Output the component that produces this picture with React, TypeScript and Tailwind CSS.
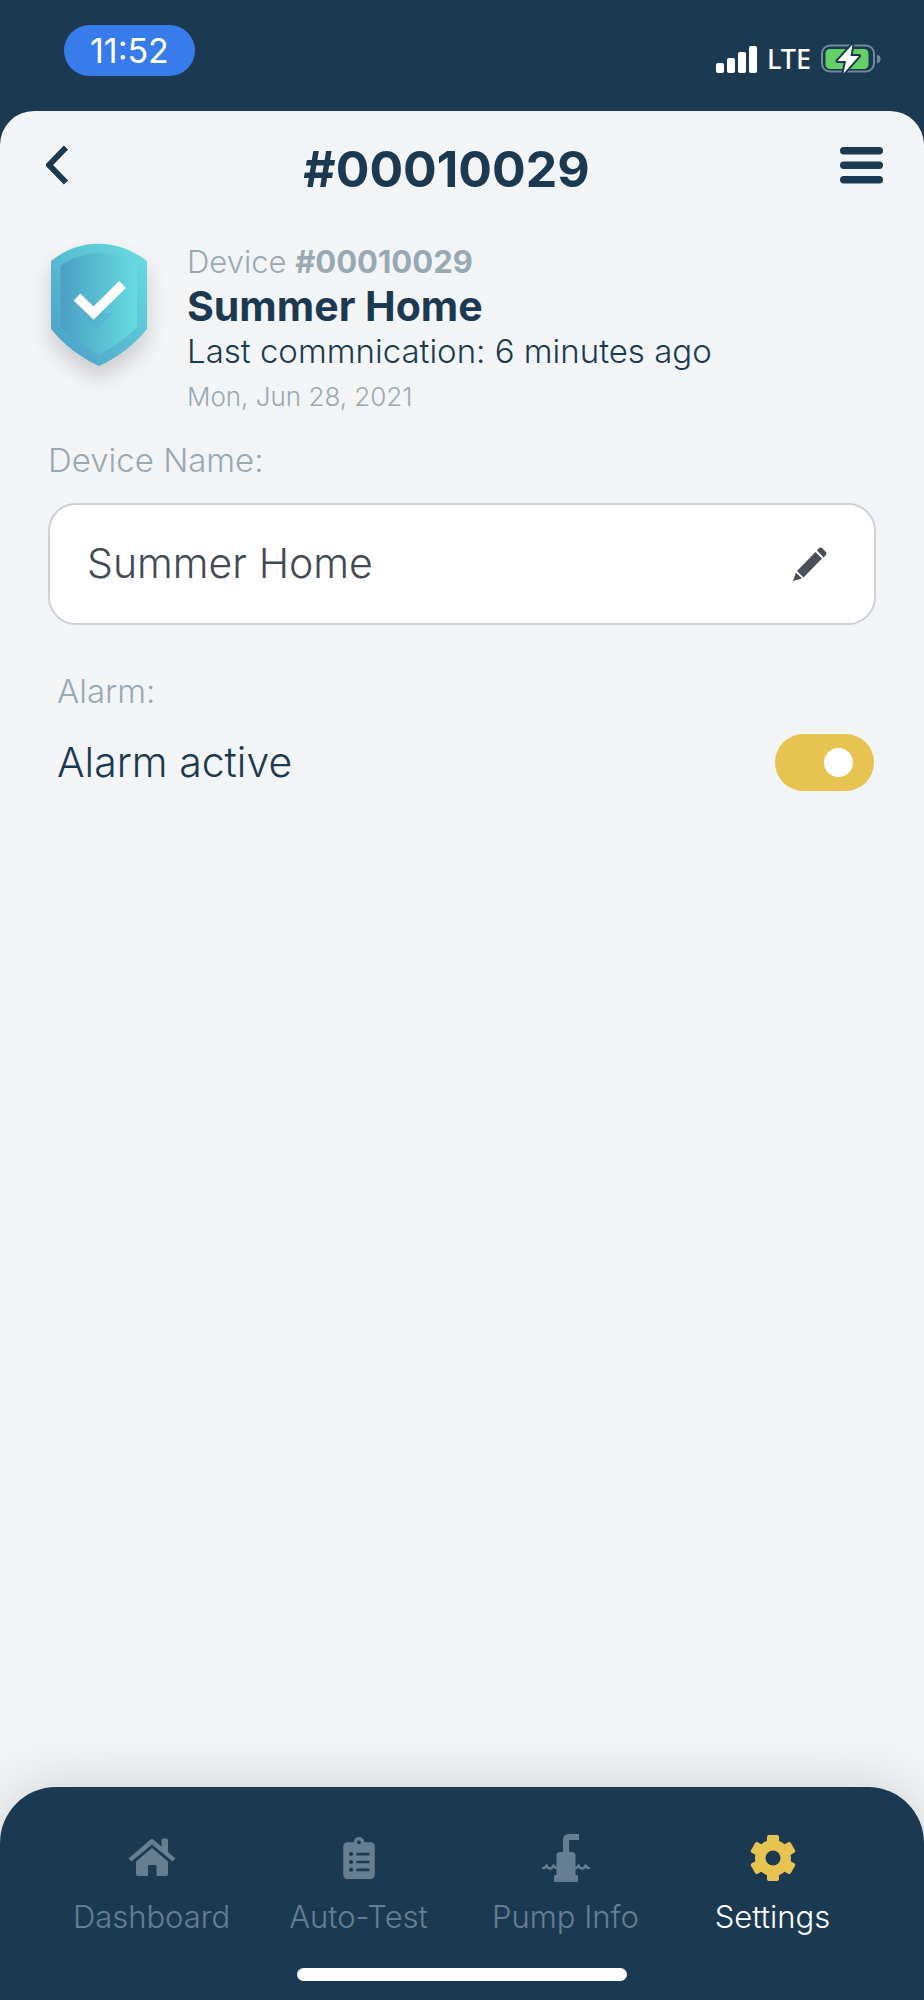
import React, { useState } from 'react';
import { FaClipboardList } from 'react-icons/fa';

const SignalIcon = () => (
  <svg width="41" height="27" viewBox="0 0 41 27" fill="#fff">
    <rect x="0" y="17" width="8" height="10" rx="2" />
    <rect x="11" y="12" width="8" height="15" rx="2" />
    <rect x="22" y="6" width="8" height="21" rx="2" />
    <rect x="33" y="0" width="8" height="27" rx="2" />
  </svg>
);

const BatteryIcon = () => (
  <svg width="60" height="30" viewBox="0 0 60 30">
    <rect x="1" y="1.5" width="52" height="26" rx="8" fill="none" stroke="#72899a" strokeWidth="2" />
    <path d="M56 10.5c2 .6 3.6 2.2 3.6 4.5s-1.6 3.9-3.6 4.5z" fill="#72899a" />
    <rect x="4.5" y="5" width="43" height="20" rx="4.5" fill="#65d065" />
    <path d="M31.5 0.5 L16.500 17 H25 L22.500 29.500 L38 12 H29.500z" fill="#fff" stroke="#1b3a52" strokeWidth="4" strokeLinejoin="round" paintOrder="stroke" />
  </svg>
);

const BackIcon = () => (
  <svg width="24" height="40" viewBox="0 0 24 40" fill="none" stroke="currentColor" strokeWidth="6" strokeLinejoin="round">
    <path d="M21 2.5 L4 20 L21 37.5" />
  </svg>
);

const MenuIcon = () => (
  <svg width="43" height="37" viewBox="0 0 43 37" fill="currentColor">
    <rect x="0" y="0" width="43" height="7.5" rx="3.7" />
    <rect x="0" y="14.5" width="43" height="7.5" rx="3.7" />
    <rect x="0" y="29" width="43" height="7.5" rx="3.7" />
  </svg>
);

const ShieldIcon = () => (
  <svg className="mt-1 shrink-0 overflow-visible drop-shadow-[0_12px_10px_rgba(0,0,0,0.16)]" width="96" height="123" viewBox="0 0 96 123">
    <defs>
      <linearGradient id="shieldOuter" x1="0" y1="1" x2="1" y2="0.1">
        <stop offset="0" stopColor="#4a9cc5" />
        <stop offset="1" stopColor="#66dbe0" />
      </linearGradient>
      <linearGradient id="shieldInner" x1="0" y1="0" x2="1" y2="0">
        <stop offset="0" stopColor="#4b9fc4" />
        <stop offset="1" stopColor="#66dbe0" />
      </linearGradient>
    </defs>
    <path d="M0 18 C28 -5 66 -5 96 18 V86 C84 101 66 115 48 123 C30 115 12 101 0 86z" fill="url(#shieldOuter)" />
    <path d="M9.5 23 C32 6 64 6 86 23 V84 C75 95 62 104 48 112 C34 105 20 95 9.500 84z" fill="url(#shieldInner)" />
    <path d="M30 70 L45 86 L62 70z" fill="#4b9fc4" opacity="0.25" />
    <path d="M26 54 L42.500 70.200 L71.500 41.500" fill="none" stroke="#fff" strokeWidth="9.5" />
  </svg>
);

const PencilIcon = () => (
  <svg width="34" height="34" viewBox="0 0 34 34" fill="#4a4f5a">
    <path d="M24 3.500 L26 1 Q27.500 0 29 1 L33 5 Q34 6.500 33 8 L30.500 10.500z" />
    <path d="M22.500 5 L29 11.500 L10.500 30.500 L4 24z" />
    <path d="M3 25.500 L9 31.500 L0 34z" />
  </svg>
);

const HouseIcon = () => (
  <svg width="48" height="48" viewBox="0 0 48 48" fill="currentColor">
    <path d="M24 14 L40 27.500 V40 Q40 42 38 42 H28.500 V32 Q28.500 31 27.500 31 H21 Q20 31 20 32 V42 H10 Q8 42 8 40 V27.500z" />
    <path d="M24 4.500 L33.500 12.500 V6 Q33.500 4.500 35 4.500 H38.500 Q40 4.500 40 6 V18 L47.500 24.500 L44.500 27.500 L24 10.500 L3.500 27.500 L.5 24.500 L22 6 Q24 4 26 6z" />
  </svg>
);

const PumpIcon = () => (
  <svg width="48" height="48" viewBox="0 0 48 48" fill="currentColor">
    <path d="M21 20 V6 Q21 0 27 0 H37 V6 H28 Q27 6 27 7 V18 H30 Q33.500 18 33.500 22 V41 H34.500 Q36 41 36 42.500 V48 H12 V42.500 Q12 41 13.500 41 H14.500 V22 Q14.500 18 18 18 H21z" />
    <path
      d="M1 34 Q3.500 34 4.500 31.500 Q6 34.500 8 34.500 Q10 34.500 11.500 31.500 Q12.500 34 15 34 M33 34 Q35.500 34 36.500 31.500 Q38 34.500 40 34.500 Q42 34.500 43.500 31.500 Q44.500 34 47 34"
      fill="none"
      stroke="currentColor"
      strokeWidth="2.5"
      strokeLinejoin="round"
      strokeLinecap="round"
    />
  </svg>
);

const GearIcon = () => (
  <svg width="48" height="48" viewBox="0 0 48 48" fill="currentColor">
    <rect x="18" y="1" width="12" height="46" rx="2" />
    <rect x="18" y="1" width="12" height="46" rx="2" transform="rotate(60 24 24)" />
    <rect x="18" y="1" width="12" height="46" rx="2" transform="rotate(120 24 24)" />
    <circle cx="24" cy="24" r="18" />
    <circle cx="24" cy="24" r="7.5" fill="#1b3a52" />
  </svg>
);

const ClipboardIcon = () => <FaClipboardList size={42} />;

const tabs = [
  { name: 'Dashboard', Icon: HouseIcon },
  { name: 'Auto-Test', Icon: ClipboardIcon },
  { name: 'Pump Info', Icon: PumpIcon },
  { name: 'Settings', Icon: GearIcon },
];

export const Settings = () => {
  const [name, setName] = useState('Summer Home');
  const [alarm, setAlarm] = useState(true);

  return (
    <div className="flex min-h-screen flex-col bg-[#1b3a52] font-['Inter',sans-serif] text-[#1b3a52]">
      <div className="flex h-[111px] items-start justify-between pt-[25px] pr-[43px] pl-16 text-white">
        <div className="flex h-[51px] items-center rounded-full bg-[#387ceb] px-[26px] text-[34px]">11:52</div>
        <div className="flex h-[68px] items-center gap-[10px]">
          <SignalIcon />
          <span className="font-['Noto_Sans',sans-serif] text-[27px] font-medium">LTE</span>
          <BatteryIcon />
        </div>
      </div>

      <div className="flex flex-1 flex-col rounded-t-[34px] bg-[#f3f4f6]">
        <header className="flex items-center justify-between pt-5 pr-[41px] pl-[45px]">
          <button type="button" aria-label="Back"><BackIcon /></button>
          <h1 className="mt-2 pr-4 text-[50px] leading-[60px] font-bold">#00010029</h1>
          <button type="button" aria-label="Menu"><MenuIcon /></button>
        </header>

        <main className="flex flex-1 flex-col px-12">
          <section className="mt-10 flex items-start gap-10 pl-[3px]">
            <ShieldIcon />
            <div>
              <div className="text-[31px] leading-[45px] font-light text-[#98a9b3]">
                Device <span className="font-bold">#00010029</span>
              </div>
              <h2 className="text-[41px] leading-[45px] font-bold">Summer Home</h2>
              <div className="text-[33px] leading-[45px] font-light">Last commnication: 6 minutes ago</div>
              <div className="text-[26px] leading-[45px] font-light text-[#98a9b3]">Mon, Jun 28, 2021</div>
            </div>
          </section>

          <label htmlFor="deviceName" className="mt-[19px] text-[33px] leading-[45px] font-light text-[#98a9b3]">Device Name:</label>
          <div className="mt-5 flex h-[122px] items-center rounded-[28px] border-2 border-[#cbd0d9] bg-white pr-[47px] pl-[37px]">
            <input
              id="deviceName"
              type="text"
              className="min-w-0 flex-1 bg-transparent text-[41px] font-light text-[#444a55] outline-none"
              value={name}
              onChange={(e) => setName(e.target.value)}
            />
            <button type="button" aria-label="Edit device name"><PencilIcon /></button>
          </div>

          <div className="mt-11 pl-[9px] text-[33px] leading-[45px] font-light text-[#98a9b3]">Alarm:</div>
          <label className="mt-5 flex items-center justify-between pr-[2px] pl-[9px] text-[41px] leading-[57px] font-light">
            Alarm active
            <input
              type="checkbox"
              role="switch"
              className="peer sr-only"
              checked={alarm}
              onChange={(e) => setAlarm(e.target.checked)}
            />
            <span className="flex h-[57px] w-[99px] items-center rounded-full bg-gray-300 px-[21px] peer-checked:justify-end peer-checked:bg-[#e7c452]">
              <span className="size-[29px] rounded-full bg-white" />
            </span>
          </label>
        </main>

        <div className="overflow-hidden pt-16">
          <nav className="rounded-t-[56px] bg-[#1b3a52] px-12 pt-[47px] pb-[19px] shadow-[0_0_60px_rgba(0,0,0,0.15)]">
            <div className="grid grid-cols-4">
              {tabs.map(({ name, Icon }) => (
                <a
                  key={name}
                  href="#"
                  className={name === 'Settings' ? 'flex flex-col items-center text-[#e7c452]' : 'flex flex-col items-center text-[#667e92]'}
                >
                  <span className="flex h-12 items-center"><Icon /></span>
                  <span className={name === 'Settings' ? 'mt-3 text-[31px] leading-[45px] font-light text-white' : 'mt-3 text-[31px] leading-[45px] font-light'}>
                    {name}
                  </span>
                </a>
              ))}
            </div>
            <div className="mx-auto mt-[29px] h-[13px] w-[330px] rounded-full bg-white" />
          </nav>
        </div>
      </div>
    </div>
  );
};

export default Settings;
